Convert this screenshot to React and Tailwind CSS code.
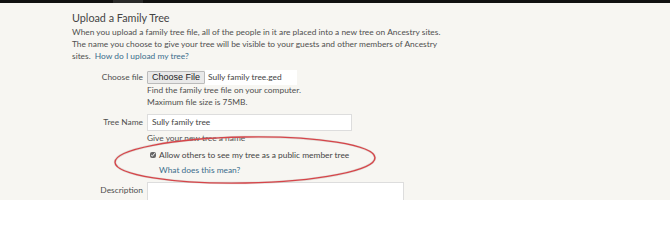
export default function App() {
  const font = { fontFamily: 'Lato, "Liberation Sans", sans-serif' };
  return (
    <div className="relative w-[670px] h-[200px] overflow-hidden bg-[#f7f6f2] text-[#4f4f4f]" style={font}>
      {/* top nav strip */}
      <div className="flex h-[3px] bg-[#111]">
        <div className="ml-[113px] w-[30px] bg-[#2a2a2a]" />
      </div>

      <div className="pl-[72px] pt-[8px]">
        <h1 className="text-[10.8px] leading-[14px] text-[#444]">Upload a Family Tree</h1>
        <p className="mt-[1px] w-[370px] text-[8.4px] leading-[12px]">
          When you upload a family tree file, all of the people in it are placed into a new tree on Ancestry sites.
          The name you choose to give your tree will be visible to your guests and other members of Ancestry
          sites. <a className="ml-[2px] text-[#3b6d8c]">How do I upload my tree?</a>
        </p>

        <div className="mt-[8px] grid grid-cols-[71px_1fr] gap-x-[4px] text-[8.4px]">
          {/* choose file */}
          <div className="flex h-[15px] items-center justify-end">Choose file</div>
          <div className="flex h-[15px] items-center">
            <div className="flex h-[13px] items-center border border-[#bbb] bg-[#e9e9e9] px-[4px] text-[9px] text-[#222] rounded-[1px]" style={{ fontFamily: '"Liberation Sans", Arial, sans-serif' }}>
              Choose File
            </div>
            <div className="flex h-[15px] w-[92px] items-center bg-white pl-[3px] text-[#444]">Sully family tree.ged</div>
          </div>
          <div />
          <div className="-mt-[1px] leading-[12px]">
            <div>Find the family tree file on your computer.</div>
            <div>Maximum file size is 75MB.</div>
          </div>

          {/* tree name */}
          <div className="mt-[6px] flex h-[17px] items-center justify-end">Tree Name</div>
          <div className="mt-[6px] flex h-[17px] w-[205px] items-center border border-[#ddd] bg-white pl-[4px] text-[#444]">
            Sully family tree
          </div>
          <div />
          <div className="pt-[1px] leading-[12px]">Give your new tree a name</div>

          <div />
          <div className="mt-[5px] flex items-center gap-[3px] pl-[3px] leading-[12px] text-[#444]">
            <input type="checkbox" defaultChecked className="h-[6px] w-[6px] accent-[#666]" />
            <span>Allow others to see my tree as a public member tree</span>
          </div>
          <div />
          <div className="mt-[3px] pl-[12px] leading-[12px] text-[#3b6d8c]">What does this mean?</div>

          {/* description */}
          <div className="mt-[6px] flex h-[16px] items-center justify-end">Description</div>
          <div className="mt-[6px] h-[30px] w-[257px] border border-[#ddd] bg-white" />
        </div>
      </div>

      {/* red annotation ellipse */}
      <svg className="pointer-events-none absolute left-0 top-0" width="670" height="200">
        <ellipse cx="245" cy="160" rx="130" ry="23" transform="rotate(-1 245 160)" fill="none" stroke="#b8a8a0" strokeWidth="2.5" opacity="0.35" />
        <ellipse cx="245" cy="160" rx="130" ry="23" transform="rotate(-1 245 160)" fill="none" stroke="#d6454a" strokeWidth="1.4" />
      </svg>
    </div>
  );
}
